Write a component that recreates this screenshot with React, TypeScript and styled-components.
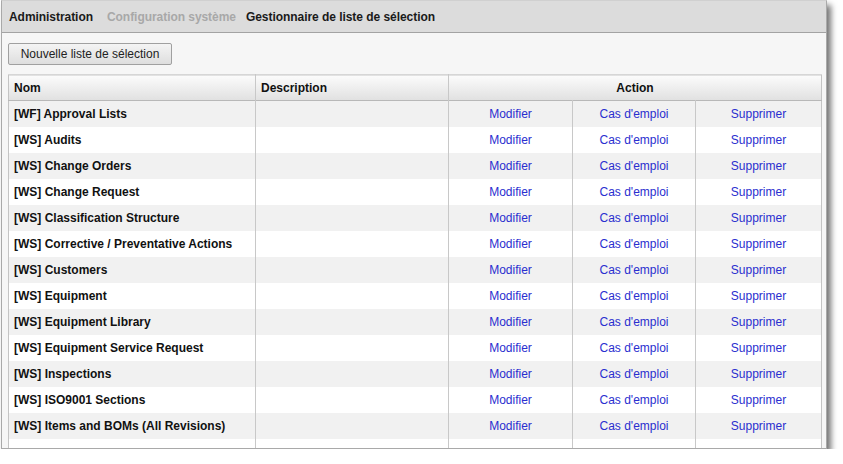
import React from "react";
import styled, { createGlobalStyle } from "styled-components";

const GlobalStyle = createGlobalStyle`
  html, body {
    margin: 0;
    padding: 0;
    background: #ffffff;
    font-family: "Liberation Sans", Arial, sans-serif;
  }
`;

const Window = styled.div`
  margin-left: 1px;
  width: 824px;
  height: 447px;
  border: 1px solid #a9a9a9;
  border-top-color: #d0d0d0;
  background: #f6f6f6;
  box-shadow: 4px 5px 6px rgba(0, 0, 0, 0.55);
  overflow: hidden;
  display: flex;
  flex-direction: column;
`;

const Breadcrumb = styled.div`
  height: 31px;
  flex: none;
  display: flex;
  align-items: center;
  gap: 14px;
  padding-left: 7px;
  background: #dcdcdc;
  border-bottom: 1px solid #a3a3a3;
  font-size: 12px;
  font-weight: bold;
  letter-spacing: -0.05px;
`;

const Crumb = styled.span<{ muted?: boolean }>`
  color: ${(p) => (p.muted ? "#a8a8a8" : "#1a1a1a")};
  margin-right: ${(p) => (p.muted ? "-4px" : "0")};
`;

const Body = styled.div`
  flex: 1;
  min-height: 0;
  padding: 10px 0 0 6px;
  display: flex;
  flex-direction: column;
  gap: 9px;
`;

const Button = styled.button`
  flex: none;
  align-self: flex-start;
  height: 22px;
  width: 164px;
  padding: 0;
  border: 1px solid #a0a0a0;
  border-radius: 2px;
  background: linear-gradient(#f4f4f4, #dedede);
  font-family: "Liberation Sans", Arial, sans-serif;
  font-size: 12px;
  color: #222;
`;

const Table = styled.table`
  flex: none;
  width: 814px;
  border-collapse: collapse;
  table-layout: fixed;
  border-left: 1px solid #c4c4c4;
  border-right: 1px solid #c4c4c4;
  font-size: 12px;
`;

const HeadRow = styled.tr`
  height: 26px;
  background: linear-gradient(#fbfbfb, #e1e1e1);
  border-top: 1px solid #d6d6d6;
  border-bottom: 1px solid #b8b8b8;
`;

const Th = styled.th<{ center?: boolean }>`
  padding: 0 5px;
  text-align: ${(p) => (p.center ? "center" : "left")};
  font-weight: bold;
  color: #111;
  border-left: 1px solid #c8c8c8;
  &:first-child {
    border-left: none;
  }
`;

const Row = styled.tr<{ shaded: boolean }>`
  height: 26px;
  background: ${(p) => (p.shaded ? "#f1f1f1" : "#ffffff")};
`;

const NameCell = styled.td`
  padding: 0 5px;
  font-weight: bold;
  color: #111;
  white-space: nowrap;
`;

const Cell = styled.td`
  border-left: 1px solid #c8c8c8;
`;

const LinkCell = styled.td`
  border-left: 1px solid #c8c8c8;
  text-align: center;
  color: #2a2ecf;
  cursor: pointer;
`;

const lists = [
  "[WF] Approval Lists",
  "[WS] Audits",
  "[WS] Change Orders",
  "[WS] Change Request",
  "[WS] Classification Structure",
  "[WS] Corrective / Preventative Actions",
  "[WS] Customers",
  "[WS] Equipment",
  "[WS] Equipment Library",
  "[WS] Equipment Service Request",
  "[WS] Inspections",
  "[WS] ISO9001 Sections",
  "[WS] Items and BOMs (All Revisions)",
];

export default function App() {
  return (
    <>
      <GlobalStyle />
      <Window>
        <Breadcrumb>
          <Crumb>Administration</Crumb>
          <Crumb muted>Configuration système</Crumb>
          <Crumb>Gestionnaire de liste de sélection</Crumb>
        </Breadcrumb>
        <Body>
          <Button>Nouvelle liste de sélection</Button>
          <Table>
            <colgroup>
              <col style={{ width: 247 }} />
              <col style={{ width: 193 }} />
              <col style={{ width: 124 }} />
              <col style={{ width: 123 }} />
              <col />
            </colgroup>
            <thead>
              <HeadRow>
                <Th>Nom</Th>
                <Th>Description</Th>
                <Th center colSpan={3}>
                  Action
                </Th>
              </HeadRow>
            </thead>
            <tbody>
              {lists.map((name, i) => (
                <Row key={name} shaded={i % 2 === 0}>
                  <NameCell>{name}</NameCell>
                  <Cell />
                  <LinkCell>Modifier</LinkCell>
                  <LinkCell>Cas d'emploi</LinkCell>
                  <LinkCell>Supprimer</LinkCell>
                </Row>
              ))}
              <Row shaded={false}>
                <NameCell />
                <Cell />
                <Cell />
                <Cell />
                <Cell />
              </Row>
            </tbody>
          </Table>
        </Body>
      </Window>
    </>
  );
}
